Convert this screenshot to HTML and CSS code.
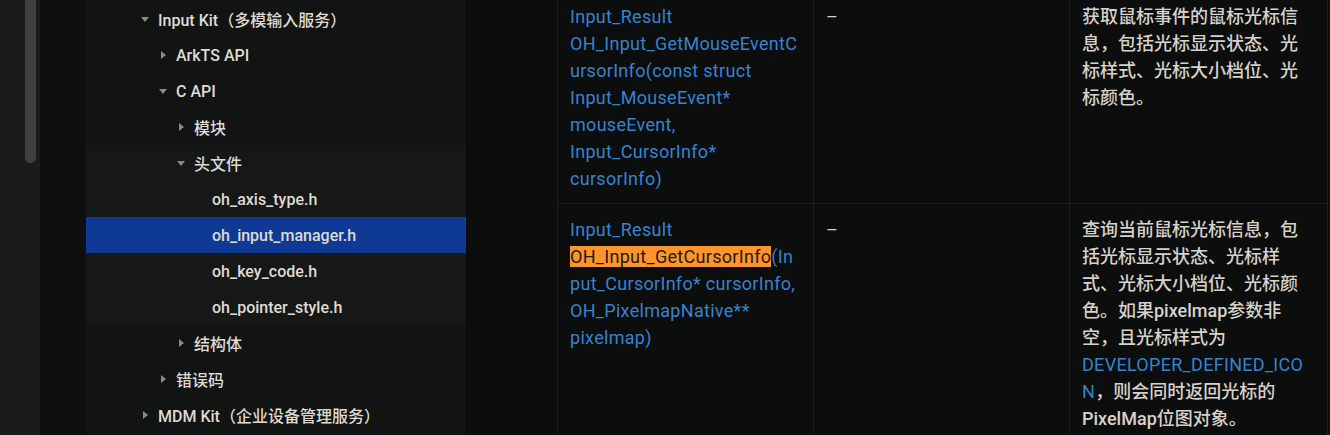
FILE: index.html
```html
<!DOCTYPE html>
<html lang="zh-CN">
<head>
<meta charset="utf-8">
<title>oh_input_manager.h</title>
<link rel="stylesheet" href="styles.css">
</head>
<body>
<div class="page">
  <div class="rail"><div class="thumb"></div></div>
  <div class="gutter"></div>
  <nav class="sidebar">
    <div class="tree">
      <div class="item l0"><span class="icon"><span class="caret down"></span></span><span class="label">Input Kit（多模输入服务）</span></div>
      <div class="item l1"><span class="icon"><span class="caret right"></span></span><span class="label">ArkTS API</span></div>
      <div class="item l1"><span class="icon"><span class="caret down"></span></span><span class="label">C API</span></div>
      <div class="item l2"><span class="icon"><span class="caret right"></span></span><span class="label">模块</span></div>
      <div class="group">
        <div class="item l2"><span class="icon"><span class="caret down"></span></span><span class="label">头文件</span></div>
        <div class="item l3"><span class="icon"></span><span class="label">oh_axis_type.h</span></div>
        <div class="item l3 selected"><span class="icon"></span><span class="label">oh_input_manager.h</span></div>
        <div class="item l3"><span class="icon"></span><span class="label">oh_key_code.h</span></div>
        <div class="item l3"><span class="icon"></span><span class="label">oh_pointer_style.h</span></div>
      </div>
      <div class="item l2"><span class="icon"><span class="caret right"></span></span><span class="label">结构体</span></div>
      <div class="item l1"><span class="icon"><span class="caret right"></span></span><span class="label">错误码</span></div>
      <div class="item l0"><span class="icon"><span class="caret right"></span></span><span class="label">MDM Kit（企业设备管理服务）</span></div>
    </div>
  </nav>
  <main class="content">
    <table class="api">
      <tr>
        <td class="code">Input_Result OH_Input_GetMouseEventCursorInfo(const struct Input_MouseEvent* mouseEvent, Input_CursorInfo* cursorInfo)</td>
        <td class="dash">–</td>
        <td class="desc">获取鼠标事件的鼠标光标信息，包括光标显示状态、光标样式、光标大小档位、光标颜色。</td>
      </tr>
      <tr>
        <td class="code">Input_Result <mark class="hit">OH_Input_GetCursorInfo</mark>(Input_CursorInfo* cursorInfo, OH_PixelmapNative** pixelmap)</td>
        <td class="dash">–</td>
        <td class="desc">查询当前鼠标光标信息，包括光标显示状态、光标样式、光标大小档位、光标颜色。如果pixelmap参数非空，且光标样式为<span class="link">DEVELOPER_DEFINED_ICON</span>，则会同时返回光标的PixelMap位图对象。</td>
      </tr>
    </table>
  </main>
</div>
</body>
</html>
```

FILE: styles.css
```css
html, body {
  margin: 0;
  padding: 0;
  height: 100%;
  overflow: hidden;
  background: #0c0d0d;
}

.page {
  display: flex;
  height: 435px;
  font-family: Roboto, "Noto Sans CJK SC", sans-serif;
}

.rail {
  width: 40px;
  flex: none;
  background: #1a1b1b;
  padding-left: 25px;
  box-sizing: border-box;
}

.thumb {
  width: 11px;
  height: 163px;
  background: #3f4040;
  border-radius: 0 0 6px 6px;
}

.gutter {
  width: 46px;
  flex: none;
  background: #0e0f0f;
}

.sidebar {
  width: 380px;
  flex: none;
  background: #121313;
  border-right: 1px solid #090a0a;
}

.tree {
  padding-top: 1px;
}

.group {
  background: #161717;
}

.item {
  height: 36px;
  display: flex;
  align-items: center;
  font-size: 16px;
  font-weight: 500;
  color: #dfdbd3;
  white-space: nowrap;
}

.item.l0 { padding-left: 51px; }
.item.l1 { padding-left: 69px; }
.item.l2 { padding-left: 87px; }
.item.l3 { padding-left: 105px; }

.item.selected {
  background: #0e3a96;
}

.icon {
  width: 16px;
  height: 16px;
  margin-right: 5px;
  display: flex;
  align-items: center;
  justify-content: center;
  flex: none;
}

.caret {
  width: 0;
  height: 0;
}

.caret.down {
  border-left: 4px solid transparent;
  border-right: 4px solid transparent;
  border-top: 5px solid #8a8a8a;
}

.caret.right {
  border-top: 4px solid transparent;
  border-bottom: 4px solid transparent;
  border-left: 5px solid #8a8a8a;
}

.content {
  flex: 1;
  padding-left: 90px;
  min-width: 0;
}

.api {
  border-collapse: collapse;
  table-layout: fixed;
  width: 770px;
  margin-top: -10px;
  font-size: 18px;
  line-height: 27px;
}

.api td {
  vertical-align: top;
  border: 1px solid #1c1d1d;
  padding: 12px 13px 11px 12px;
  overflow-wrap: break-word;
  box-sizing: border-box;
}

.api td.code {
  width: 256px;
  color: #3783cf;
  letter-spacing: 0.3px;
}

.api td.dash {
  width: 256px;
  color: #d6d2ca;
}

.api td.desc {
  width: 258px;
  color: #d6d2ca;
  font-weight: 500;
}

.link {
  color: #3783cf;
  font-weight: 400;
  letter-spacing: 0.3px;
}

.hit {
  background: #fd952c;
  color: #1d1b18;
}
```
